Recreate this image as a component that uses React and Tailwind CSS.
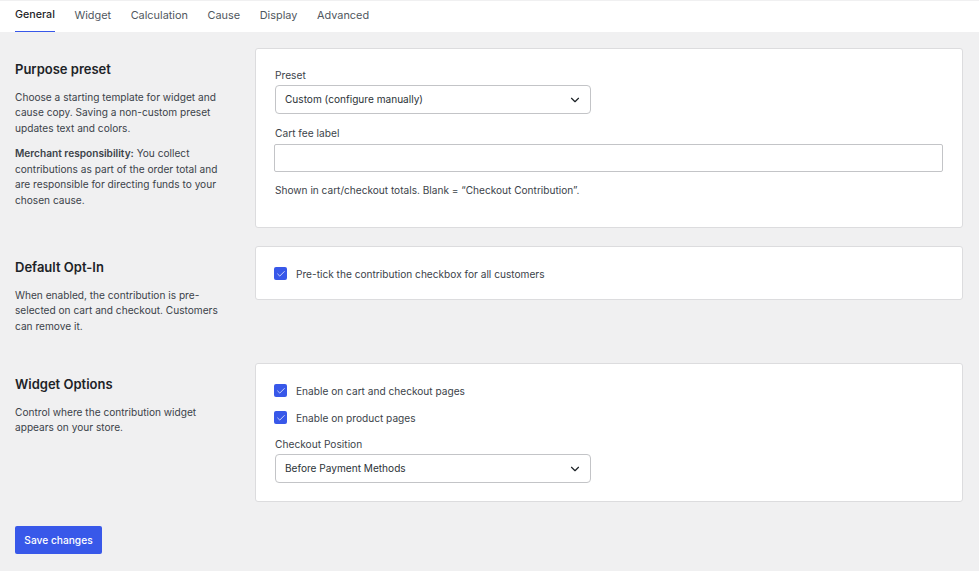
import { Check, ChevronDown } from 'lucide-react'

const tabs = ['General', 'Widget', 'Calculation', 'Cause', 'Display', 'Advanced']

function SelectBox({ value }) {
  return (
    <div className="flex h-[29px] w-[316px] items-center justify-between rounded-[4px] border border-[#c3c4c7] bg-white pl-[9px] pr-[8px] text-[10.1px] text-[#2c3338]">
      <span>{value}</span>
      <ChevronDown size={14} strokeWidth={2} className="text-[#1d2327]" />
    </div>
  )
}

function CheckRow({ label }) {
  return (
    <div className="-ml-px flex h-[13px] items-center gap-[9px]">
      <span className="flex size-[13px] items-center justify-center rounded-[2px] bg-[#3858e9]">
        <Check size={10} strokeWidth={1.75} className="text-white" />
      </span>
      <span className="pt-[2px] text-[10.15px] text-[#3c434a]">{label}</span>
    </div>
  )
}

function Section({ title, children, body, className }) {
  return (
    <section className={`flex items-start ${className}`}>
      <div className="w-[240px] shrink-0 pt-[12px] pr-[25px]">
        <h2 className="text-[13px] leading-[18px] font-semibold text-[#1d2327]">{title}</h2>
        <div className="mt-[11.5px] text-[10.15px] leading-[15.75px] text-[#3c434a]">{body}</div>
      </div>
      <div className="w-[708px] rounded-[3px] border border-[#dcdcde] bg-white px-[19px]">
        {children}
      </div>
    </section>
  )
}

export default function App() {
  return (
    <div className="min-h-[571px] bg-[#f0f0f1] font-['Inter',sans-serif]">
      <nav className="flex h-[32px] gap-[19.6px] border-t border-[#f0f0f1] bg-white px-[15px]">
        {tabs.map((tab, i) => (
          <div
            key={tab}
            className={`flex h-[31px] items-center border-b pb-px ${
              i === 0 ? 'border-[#3858e9] text-[10.7px] font-medium text-[#1d2327]' : 'border-transparent text-[10.9px] text-[#50575e]'
            }`}
          >
            {tab}
          </div>
        ))}
      </nav>

      <main className="px-[15px] pt-[16px]">
        <Section
          title="Purpose preset"
          className="mb-[18px]"
          body={
            <>
              <p>Choose a starting template for widget and cause copy. Saving a non-custom preset updates text and colors.</p>
              <p className="mt-[9px]">
                <strong className="font-semibold">Merchant responsibility:</strong> You collect contributions as part of the order total and are responsible for directing funds to your chosen cause.
              </p>
            </>
          }
        >
          <div className="h-[178px] pt-[19px]">
            <label className="mb-[3px] block text-[10.2px] leading-[14px] text-[#3c434a]">Preset</label>
            <SelectBox value="Custom (configure manually)" />
            <label className="mt-[12px] mb-[4px] block text-[10.2px] leading-[14px] text-[#3c434a]">Cart fee label</label>
            <div className="-ml-px h-[28px] w-[669px] rounded-[2px] border border-[#c3c4c7] bg-white" />
            <p className="mt-[10px] text-[10.1px] leading-[16px] text-[#3c434a]">
              Shown in cart/checkout totals. Blank = “Checkout Contribution”.
            </p>
          </div>
        </Section>

        <Section
          title="Default Opt-In"
          className="mb-[18px] h-[99px]"
          body="When enabled, the contribution is pre-selected on cart and checkout. Customers can remove it."
        >
          <div className="flex h-[52px] items-center pt-px">
            <CheckRow label="Pre-tick the contribution checkbox for all customers" />
          </div>
        </Section>

        <Section
          title="Widget Options"
          body="Control where the contribution widget appears on your store."
        >
          <div className="h-[137px] pt-[20px]">
            <CheckRow label="Enable on cart and checkout pages" />
            <div className="mt-[14px]">
              <CheckRow label="Enable on product pages" />
            </div>
            <label className="mt-[13px] mb-[3px] block text-[10.2px] leading-[14px] text-[#3c434a]">Checkout Position</label>
            <SelectBox value="Before Payment Methods" />
          </div>
        </Section>

        <button className="mt-[24px] mb-[17px] block h-[28px] w-[87px] rounded-[2px] bg-[#3858e9] pt-px text-[10.2px] font-medium text-white">
          Save changes
        </button>
      </main>
    </div>
  )
}
